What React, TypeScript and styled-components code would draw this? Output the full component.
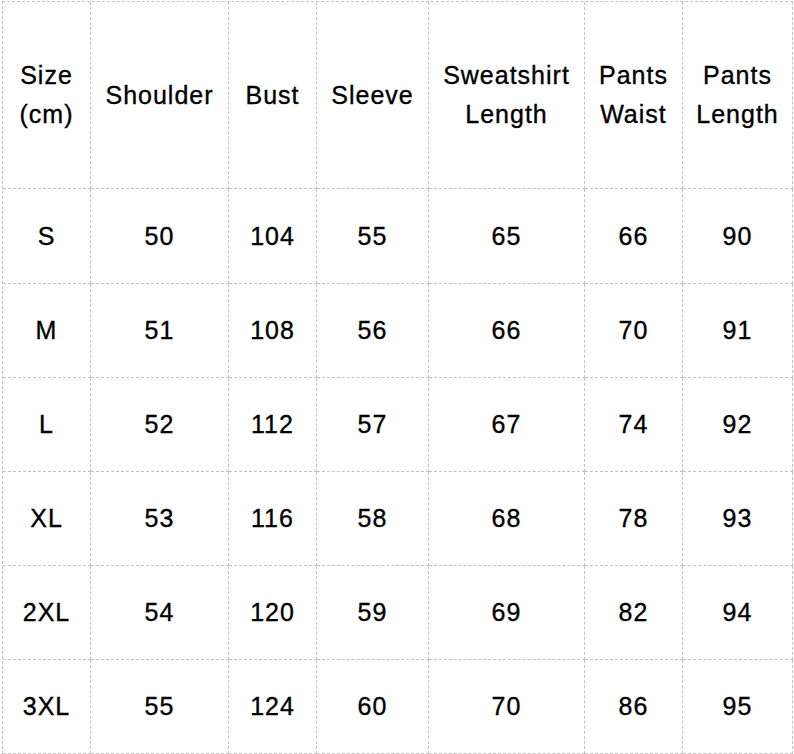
import styled, { createGlobalStyle } from "styled-components";

const GlobalStyle = createGlobalStyle`
  html, body {
    margin: 0;
    padding: 0;
    background: #ffffff;
  }
  body {
    font-family: "Liberation Sans", Arial, sans-serif;
  }
`;

const headers = [
  ["Size", "(cm)"],
  ["Shoulder"],
  ["Bust"],
  ["Sleeve"],
  ["Sweatshirt", "Length"],
  ["Pants", "Waist"],
  ["Pants", "Length"],
];

const rows = [
  ["S", "50", "104", "55", "65", "66", "90"],
  ["M", "51", "108", "56", "66", "70", "91"],
  ["L", "52", "112", "57", "67", "74", "92"],
  ["XL", "53", "116", "58", "68", "78", "93"],
  ["2XL", "54", "120", "59", "69", "82", "94"],
  ["3XL", "55", "124", "60", "70", "86", "95"],
];

const App = () => {
  return (
    <>
      <GlobalStyle />
      <Page>
        <SizeGrid>
          {headers.map((lines, i) => (
            <Cell key={"h" + i}>
              <HeadText>
                {lines.map((line, j) => (
                  <span key={j}>{line}</span>
                ))}
              </HeadText>
            </Cell>
          ))}
          {rows.map((row, r) =>
            row.map((value, c) => <Cell key={r + "-" + c}>{value}</Cell>)
          )}
        </SizeGrid>
      </Page>
    </>
  );
};

export default App;

const Page = styled.div`
  padding: 1px 0 0 2px;
`;

const SizeGrid = styled.div`
  display: grid;
  grid-template-columns: 88px 138px 88px 112px 156px 98px 110px;
  grid-template-rows: 187px 95px repeat(5, 94px);
  width: max-content;
  border-left: 1px dashed #c2c2c2;
  border-top: 1px dashed #c2c2c2;
`;

const Cell = styled.div`
  display: flex;
  align-items: center;
  justify-content: center;
  box-sizing: border-box;
  border-right: 1px dashed #c2c2c2;
  border-bottom: 1px dashed #c2c2c2;
  font-size: 25px;
  letter-spacing: 1px;
  color: #000000;
  -webkit-text-stroke: 0.35px #000000;
  text-align: center;
`;

const HeadText = styled.div`
  display: flex;
  flex-direction: column;
  align-items: center;
  line-height: 39px;
`;
